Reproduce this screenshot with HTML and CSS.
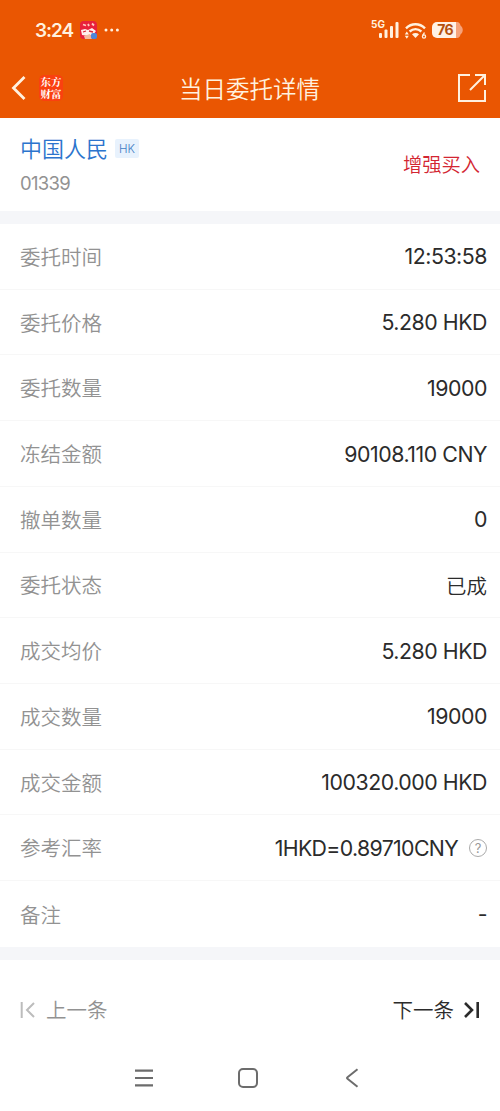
FILE: index.html
```html
<!DOCTYPE html>
<html lang="zh-CN">
<head>
    <meta charset="UTF-8">
    <title>当日委托详情</title>
    <link rel="stylesheet" href="styles.css">
</head>
<body>
    <header class="top">
        <div class="status">
            <span class="clock">3:24</span>
            <svg class="app-icon" width="18" height="18" viewBox="0 0 18 18">
                <rect width="17" height="18" rx="4" fill="#e8203c"/>
                <path d="M1 9l4-1 3 1 4-2 4 3-3 4-5 1-6-1z" fill="#fff0ee"/>
                <path d="M3 3.500l3 1M8 3l1 2M12 2.500l2 2" stroke="#ffc9c0" stroke-width="1.800"/>
                <path d="M3 11l3-1M9 10l4 1" stroke="#d92638" stroke-width="1.300"/>
                <path d="M4 15l6-2 2 5H5z" fill="#f4b9a0"/>
                <rect x="11" y="12" width="6" height="6" rx="2" fill="#4f86d9"/>
            </svg>
            <svg class="dots" width="16" height="4" viewBox="0 0 16 4" fill="#fff1df">
                <circle cx="2" cy="2" r="1.500"/><circle cx="7.700" cy="2" r="1.500"/><circle cx="13.400" cy="2" r="1.500"/>
            </svg>
            <div class="signals">
                <span class="net">5G</span>
                <svg class="bars" width="20" height="16" viewBox="0 0 20 16" fill="#fff1df">
                    <rect x="0" y="11" width="3" height="5" rx="1"/>
                    <rect x="5.500" y="7.500" width="3" height="8.500" rx="1"/>
                    <rect x="11" y="4" width="3" height="12" rx="1"/>
                    <rect x="16.500" y="0" width="3" height="16" rx="1"/>
                </svg>
                <svg class="wifi" width="24" height="18" viewBox="0 0 24 18">
                    <g fill="none" stroke="#fff1df" stroke-width="2.400">
                        <path d="M2 6.300C7.500.9 15.500.9 21 6.300"/>
                        <path d="M5.600 9.500c3.500-3 8.300-3 11.800 0"/>
                    </g>
                    <path d="M8 12.200c2-1.700 5-1.700 7 0l-3.500 3.800z" fill="#fff1df"/>
                    <path d="M.8 12.500l2-3 2 3zM.8 13.800l2 3 2-3z" fill="#fff1df"/>
                    <path d="M20.500 10.500l-1.700 2.800" stroke="#fff1df" stroke-width="1.400"/>
                    <circle cx="20" cy="14.500" r="1.600" fill="none" stroke="#fff1df" stroke-width="1.300"/>
                </svg>
                <div class="battery">
                    <span class="level">76</span>
                    <svg width="7" height="16" viewBox="0 0 7 16"><path d="M0 0h1C3 0 4 1.500 4.500 3.500 7.500 5.500 7.500 10.500 4.500 12.500 4 14.500 3 16 1 16H0z" fill="#f6a27a"/></svg>
                </div>
            </div>
        </div>
        <div class="nav">
            <svg class="back" width="16" height="26" viewBox="0 0 16 26"><path d="M13.500 2L2.500 13l11 11" fill="none" stroke="#fff1df" stroke-width="2.800"/></svg>
            <div class="brand">东方<br>财富</div>
            <h1 class="title">当日委托详情</h1>
            <svg class="share" width="28" height="28" viewBox="0 0 28 28" fill="none" stroke="#fff1df" stroke-width="2">
                <path d="M12 1H1v26h26V16"/>
                <path d="M17 1h10v10M27 1L12 16"/>
            </svg>
        </div>
    </header>

    <section class="stock">
        <div>
            <div class="name">中国人民<span class="market">HK</span></div>
            <div class="code">01339</div>
        </div>
        <div class="side">增强买入</div>
    </section>

    <section class="rows">
        <div class="row"><span class="label">委托时间</span><span class="value">12:53:58</span></div>
        <div class="row"><span class="label">委托价格</span><span class="value">5.280 HKD</span></div>
        <div class="row"><span class="label">委托数量</span><span class="value">19000</span></div>
        <div class="row"><span class="label">冻结金额</span><span class="value">90108.110 CNY</span></div>
        <div class="row"><span class="label">撤单数量</span><span class="value">0</span></div>
        <div class="row"><span class="label">委托状态</span><span class="value cn">已成</span></div>
        <div class="row"><span class="label">成交均价</span><span class="value">5.280 HKD</span></div>
        <div class="row"><span class="label">成交数量</span><span class="value">19000</span></div>
        <div class="row"><span class="label">成交金额</span><span class="value">100320.000 HKD</span></div>
        <div class="row"><span class="label">参考汇率</span><span class="value rate">1HKD=0.89710CNY</span><span class="help">?</span></div>
        <div class="row"><span class="label">备注</span><span class="value">-</span></div>
    </section>

    <div class="pager">
        <div class="prev">
            <svg width="16" height="16" viewBox="0 0 16 16" fill="none" stroke="#bcbcbc" stroke-width="2"><path d="M1.700 0v16M14 1L7 8l7 7"/></svg>
            <span>上一条</span>
        </div>
        <div class="next">
            <span>下一条</span>
            <svg width="16" height="16" viewBox="0 0 16 16" fill="none" stroke="#2b2b2b" stroke-width="2.600"><path d="M13.700 0v16M1 1l7 7-7 7"/></svg>
        </div>
    </div>

    <div class="keys">
        <svg width="18" height="18" viewBox="0 0 18 18" stroke="#6c6c6c" stroke-width="2.200"><path d="M0 1.700h18M0 9h18M0 16.300h18"/></svg>
        <svg width="20" height="20" viewBox="0 0 20 20"><rect x="1" y="1" width="18" height="18" rx="4" fill="none" stroke="#6c6c6c" stroke-width="2"/></svg>
        <svg width="14" height="20" viewBox="0 0 14 20"><path d="M12.500 1.200L2.500 9.200q-1 .8 0 1.600l10 8" fill="none" stroke="#6c6c6c" stroke-width="2"/></svg>
    </div>
</body>
</html>
```
FILE: styles.css
```css
* {
  box-sizing: border-box;
}

body {
  margin: 0;
  height: 1111px;
  background-color: #fff;
  font-family: Inter, "Noto Sans CJK SC", sans-serif;
  overflow: hidden;
}

svg {
  display: block;
  flex: none;
}

.top {
  height: 118px;
  padding-top: 14px;
  background-color: #ea5602;
  color: #fff1df;
}

.status {
  display: flex;
  align-items: center;
  height: 32px;
  padding: 0 37px 0 35px;
}

.clock {
  width: 45px;
  font-size: 19px;
  font-weight: 600;
  letter-spacing: -1.1px;
}

.dots {
  margin-left: 6px;
}

.signals {
  display: flex;
  align-items: center;
  margin-left: auto;
}

.net {
  align-self: flex-start;
  margin: -2px -6px 0 0;
  font-size: 10px;
  line-height: 10px;
  font-weight: 700;
}

.wifi {
  margin: 1px 4px 0 5px;
}

.battery {
  display: flex;
}

.level {
  width: 24px;
  height: 16px;
  padding-left: 2px;
  border-radius: 5px 0 0 5px;
  background-color: #fff1e6;
  color: #b5500f;
  font-size: 14px;
  line-height: 16px;
  font-weight: 700;
  letter-spacing: -0.8px;
  text-align: center;
}

.nav {
  display: grid;
  grid-template-columns: 28px 50px 1fr 48px 28px;
  align-items: center;
  height: 84px;
  padding: 0 14px 0 11px;
}

.brand {
  width: 24px;
  height: 26px;
  padding-top: 1px;
  border-radius: 5px;
  background-color: #fa4010;
  color: #fff;
  font-family: "Noto Serif CJK SC", "Noto Sans CJK SC", sans-serif;
  font-size: 10.5px;
  line-height: 12px;
  font-weight: 700;
  text-align: center;
}

.title {
  margin: 0;
  font-size: 23.5px;
  font-weight: 350;
  text-align: center;
}

.share {
  grid-column: 5;
}

.stock {
  display: flex;
  justify-content: space-between;
  height: 93px;
  padding: 13px 20px 0;
}

.name {
  display: flex;
  align-items: center;
  height: 32px;
  color: #2c74cd;
  font-size: 22px;
  font-weight: 350;
}

.market {
  width: 24px;
  height: 19px;
  margin: 3px 0 0 7px;
  border-radius: 2px;
  background-color: #e8f2fd;
  color: #3f7cc4;
  font-size: 11.5px;
  line-height: 20px;
  text-align: center;
}

.code {
  margin-top: 8px;
  color: #929292;
  font-size: 18.5px;
  line-height: 24px;
  font-weight: 380;
  letter-spacing: -0.7px;
}

.side {
  margin-top: 20px;
  color: #d32632;
  font-size: 19.3px;
  line-height: 28px;
  font-weight: 350;
}

.rows {
  border-top: 13px solid #f5f6f9;
  border-bottom: 13px solid #f5f6f9;
}

.row {
  display: flex;
  align-items: center;
  height: 65.73px;
  padding: 0 13px 0 20px;
  border-bottom: 1px solid #f7f7f7;
}

.row:last-child {
  border-bottom: none;
}

.label {
  padding-bottom: 1px;
  color: #929292;
  font-size: 20.5px;
  font-weight: 350;
}

.value {
  margin-left: auto;
  color: #2b2b2b;
  font-size: 21.3px;
  font-weight: 380;
  letter-spacing: -0.45px;
}

.rate {
  letter-spacing: -0.65px;
}

.cn {
  font-size: 20.5px;
  font-weight: 350;
  letter-spacing: 0;
}

.help {
  width: 18px;
  height: 18px;
  margin-left: 11px;
  border: 1px solid #aaa;
  border-radius: 50%;
  color: #999;
  font-size: 13px;
  line-height: 16px;
  text-align: center;
}

.pager {
  display: flex;
  justify-content: space-between;
  height: 100px;
  padding: 0 20px;
  font-size: 20.5px;
  font-weight: 350;
}

.prev,
.next {
  display: flex;
  align-items: center;
  gap: 10px;
}

.prev {
  color: #929292;
}

.next {
  color: #2b2b2b;
}

.pager span {
  padding-bottom: 1px;
}

.keys {
  display: flex;
  align-items: center;
  gap: 86px;
  height: 36px;
  padding-left: 134.5px;
}

.keys svg:nth-child(2) {
  margin-left: -1px;
}

.keys svg:nth-child(3) {
  margin-left: 1px;
}
```
